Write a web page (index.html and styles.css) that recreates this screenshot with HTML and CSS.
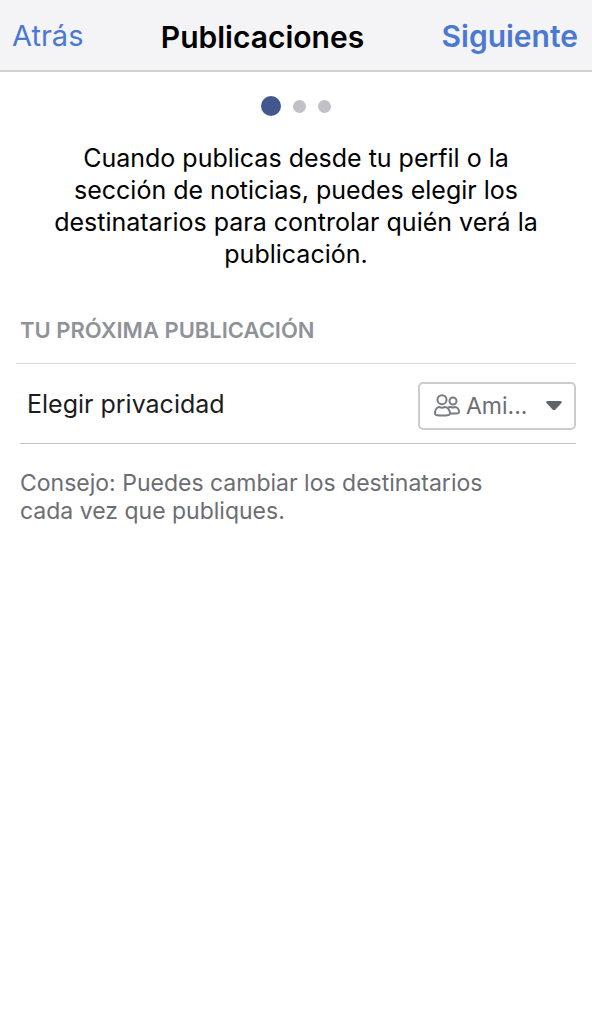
FILE: index.html
```html
<!DOCTYPE html>
<html lang="es">
<head>
<meta charset="utf-8">
<meta name="viewport" content="width=device-width, initial-scale=1">
<title>Publicaciones</title>
<link rel="stylesheet" href="styles.css">
</head>
<body>
<header class="navbar">
  <button class="nav-button" type="button">Atrás</button>
  <h1 class="title">Publicaciones</h1>
  <button class="nav-button nav-next" type="button">Siguiente</button>
</header>
<main>
  <div class="steps" role="img" aria-label="Paso 1 de 3">
    <span class="dot dot-active"></span><span class="dot"></span><span class="dot"></span>
  </div>
  <p class="intro">Cuando publicas desde tu perfil o la sección de noticias, puedes elegir los destinatarios para controlar quién verá la publicación.</p>
  <section class="post">
    <h2 class="section-title">TU PRÓXIMA PUBLICACIÓN</h2>
    <div class="row">
      <span class="label" id="privacy-label">Elegir privacidad</span>
      <button class="picker" type="button" aria-haspopup="listbox" aria-labelledby="privacy-label privacy-value">
        <svg class="friends" viewBox="0 0 26 24" aria-hidden="true">
          <circle cx="8" cy="5.700" r="4.500"/>
          <circle cx="19" cy="7" r="3.500"/>
          <path d="M1 19.500c0-3.800 2-6.500 4.500-6.500q2.500 1.300 5 0c3 0 5.500 2.700 5.500 6.500q0 1.200-1.200 1.500q-6.300 1.200-12.600 0q-1.200-.3-1.200-1.500z"/>
          <path d="M14 13.800q1.200-1.100 2.800-.8q2 1 4 0c2.500 0 4.200 2.300 4.200 5q0 1-1 1.200q-3.500.6-7.500.3"/>
        </svg>
        <span class="value" id="privacy-value">Ami...</span>
        <svg class="caret" viewBox="0 0 16 10" aria-hidden="true"><path d="M2 0h12q3 0 1 2.500l-5.500 6q-1.500 1.500-3 0l-5.500-6q-2-2.500 1-2.500z"/></svg>
      </button>
    </div>
    <p class="tip">Consejo: Puedes cambiar los destinatarios cada vez que publiques.</p>
  </section>
</main>
</body>
</html>
```
FILE: styles.css
```css
* { box-sizing: border-box; }
body { margin: 0; background: #fff; color: #000; font-family: Inter, "Liberation Sans", sans-serif; }
.navbar { display: flex; justify-content: space-between; align-items: center; height: 72px; padding: 2px 14px 0 12px; background: #f4f4f6; border-bottom: 2px solid #d2d2d4; }
.nav-button { padding: 0; border: 0; background: none; color: #4a78d3; font: inherit; font-size: 29px; line-height: 40px; }
.nav-next { font-size: 30px; font-weight: 600; }
.title { margin: 0; padding-top: 2px; font-size: 30px; line-height: 40px; font-weight: 600; }
.steps { display: flex; justify-content: center; align-items: center; gap: 12px; height: 20px; margin-top: 24px; }
.dot { width: 13px; height: 13px; border-radius: 50%; background: #c0c0c8; }
.dot-active { width: 20px; height: 20px; background: #43578f; }
.intro { max-width: 512px; margin: 26px auto 0; padding: 0 8px; text-align: center; font-size: 25px; line-height: 32px; }
.post { margin: 46px 16px 0; }
.section-title { margin: 0; padding: 0 4px 19px; border-bottom: 1px solid #d9d9db; color: #909299; font-size: 22px; line-height: 28px; font-weight: 600; }
.row { display: flex; justify-content: space-between; align-items: center; height: 80px; margin-left: 4px; padding: 4px 0 0 7px; border-bottom: 1px solid #c4c4c7; }
.label { padding-bottom: 4px; color: #1c1c1e; font-size: 25px; line-height: 32px; }
.picker { display: flex; align-items: center; width: 158px; height: 48px; padding: 0 12px 0 14px; border: 2px solid #cbcccf; border-radius: 5px; background: #fff; color: #6b6d73; font: inherit; font-size: 23px; }
.friends { width: 26px; height: 24px; margin-right: 6px; fill: none; stroke: #7a7c83; stroke-width: 2; }
.caret { width: 16px; height: 10px; margin-left: auto; fill: #606269; }
.tip { max-width: 500px; margin: 25px 4px 0; color: #6b6d73; font-size: 23px; line-height: 28px; }
```
